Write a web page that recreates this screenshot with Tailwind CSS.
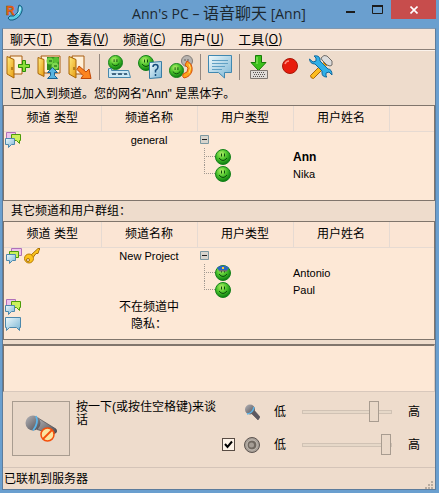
<!DOCTYPE html>
<html lang="zh-CN">
  <head>
    <meta charset="UTF-8" />
    <meta name="viewport" content="width=device-width, initial-scale=1.0" />
    <script src="https://cdn.jsdelivr.net/npm/@tailwindcss/browser@4"></script>
    <title>Ann's PC – 语音聊天 [Ann]</title>
  </head>
  <body class="font-['Liberation_Sans','Noto_Sans_CJK_SC',sans-serif] text-xs text-black">
    <!-- shared icons -->
    <svg class="absolute h-0 w-0" aria-hidden="true">
      <defs>
        <radialGradient id="green" cx="40%" cy="30%" r="70%">
          <stop offset="0" stop-color="#b4f06a" />
          <stop offset="0.5" stop-color="#4cc42c" />
          <stop offset="1" stop-color="#0b7d10" />
        </radialGradient>
        <linearGradient id="blue" x1="0" y1="0" x2="1" y2="1">
          <stop offset="0" stop-color="#f0fafc" />
          <stop offset="1" stop-color="#78b4d4" />
        </linearGradient>
        <linearGradient id="door" x1="0" y1="0" x2="1" y2="1">
          <stop offset="0" stop-color="#ffec80" />
          <stop offset="1" stop-color="#e89c10" />
        </linearGradient>
        <linearGradient id="steel" x1="0" y1="0" x2="1" y2="1">
          <stop offset="0" stop-color="#b4b4b8" />
          <stop offset="1" stop-color="#4c4a50" />
        </linearGradient>
      </defs>
      <symbol id="smile" viewBox="0 0 16 16">
        <circle cx="8" cy="8" r="7.5" fill="url(#green)" stroke="#14821a" />
        <path d="M6.500 4.500v3M9.500 4.500v3" stroke="#0c4d0c" />
        <path d="M4 9q4 5 8 0" fill="none" stroke="#0c4d0c" />
      </symbol>
      <symbol id="doorway" viewBox="0 0 24 24">
        <path d="M4 1h12v18h-9z" fill="#fff0d8" stroke="#a85c10" />
        <path d="M1 1.500l7 3v18.500l-7-4z" fill="url(#door)" stroke="#a86408" />
        <path d="M6 12v3" stroke="#7a4400" />
      </symbol>
      <symbol id="chats" viewBox="0 0 16 16">
        <path d="M1.500 0.500h9v7h-6l-3 3z" fill="#ecc4ec" stroke="#b070b8" />
        <path d="M6.500 2.500h9v6h-1v3l-3-3h-5z" fill="#ccf05c" stroke="#4c9c08" />
        <path d="M0.500 6.500h9v6h-3l-3 3v-3h-3z" fill="url(#blue)" stroke="#4c88ac" />
      </symbol>
      <symbol id="stack" viewBox="0 0 16 16">
        <path d="M5.500 0.500h10v7h-10z" fill="#ecc4ec" stroke="#b070b8" />
        <path d="M3.500 3.500h9v6h-9z" fill="#ccf05c" stroke="#4c9c08" />
        <path d="M0.500 6.500h9v6h-3l-3 3v-3h-3z" fill="url(#blue)" stroke="#4c88ac" />
      </symbol>
      <symbol id="private" viewBox="0 0 16 16">
        <path d="M0.500 1.500h15v10h-1v3l-3-3h-7l-3 3v-3h-1z" fill="url(#blue)" stroke="#4c88ac" />
      </symbol>
      <symbol id="minus" viewBox="0 0 9 9">
        <path d="M0.500 0.500h8v8h-8z" fill="#d8d4cc" stroke="#7c98a0" />
        <path d="M2 4.500h5" stroke="#202020" />
      </symbol>
      <symbol id="branch" viewBox="0 0 12 17">
        <path d="M1.500 0v17M3 8.500h9" stroke="#a09890" stroke-dasharray="1 1" />
      </symbol>
      <symbol id="branch-end" viewBox="0 0 12 17">
        <path d="M1.500 0v9M3 8.500h9" stroke="#a09890" stroke-dasharray="1 1" />
      </symbol>
      <symbol id="mic" viewBox="0 0 32 20">
        <path d="M13 3l18 11q2 3-1 4.500l-4 0-14-4z" fill="url(#steel)" stroke="#3c3a40" stroke-width="0.6" />
        <circle cx="8" cy="8" r="7.500" fill="url(#steel)" />
        <path d="M11 1q3 7-3 14.500" fill="none" stroke="#5cb4e8" stroke-width="1.8" />
      </symbol>
    </svg>

    <div class="flex min-h-screen flex-col bg-[#6a9fcf] pr-[3px] pb-[3px] pl-[2px]">
      <!-- title bar -->
      <header class="grid h-7 grid-cols-[1fr_auto_1fr]">
        <svg class="mt-1 ml-[3px] h-[18px] w-[18px]" viewBox="0 0 18 18">
          <path d="M14 1q4 1 3 6-2 7-9 9-4 1-5-2l2-2 4 0 4-4 0-3z" fill="#58cce4" stroke="#14587c" />
          <path d="M15 3q1 3-2 7" fill="none" stroke="#d8f8fc" />
          <text x="1" y="11" font-family="Liberation Sans" font-size="12" font-weight="700" fill="#f86c10" stroke="#b03c00" stroke-width="0.5">R</text>
        </svg>
        <h1 class="font-['Open_Sans','Noto_Sans_CJK_SC',sans-serif] text-sm leading-[27px] text-[#1c2830]">
          Ann's PC – <span class="text-base leading-[27px]">语音聊天</span> [Ann]
        </h1>
        <div class="flex justify-end">
          <button class="flex h-[19px] w-[27px] items-center justify-center" aria-label="最小化">
            <svg class="h-5 w-[9px]" viewBox="0 0 9 20"><path d="M0 12h9" stroke="#1c1c1c" stroke-width="2" /></svg>
          </button>
          <button class="flex h-[19px] w-[27px] items-center justify-center" aria-label="最大化">
            <svg class="h-[9px] w-[11px]" viewBox="0 0 11 9"><path d="M0.500 1h10v7.500h-10z" fill="none" stroke="#1c1c1c" /><path d="M0 1h11" stroke="#1c1c1c" stroke-width="2" /></svg>
          </button>
          <button class="flex h-[19px] w-[45px] items-center justify-center bg-[#c74d4c]" aria-label="关闭">
            <svg class="h-2 w-2" viewBox="0 0 8 8"><path d="M0.500 0.500l7 7M7.500 0.500l-7 7" stroke="#fff" stroke-width="1.600" /></svg>
          </button>
        </div>
      </header>

      <main class="flex flex-1 flex-col border border-[#5c7c9c] border-t-[#8098b0] bg-[#eedccc]">
        <nav class="flex h-[21px] items-center border-b border-[#8c8078] bg-[#f6e3d5] font-['Noto_Sans_CJK_SC',sans-serif] text-[13px] leading-5">
          <button class="px-[7px]">聊天(<u>T</u>)</button>
          <button class="px-[7px]">查看(<u>V</u>)</button>
          <button class="px-[7px]">频道(<u>C</u>)</button>
          <button class="px-[7px]">用户(<u>U</u>)</button>
          <button class="px-[7px]">工具(<u>O</u>)</button>
        </nav>

        <!-- toolbar -->
        <div class="flex h-8 items-center gap-[7px] border-t border-[#fbf3ec] pl-[3px]">
          <button aria-label="创建频道">
            <svg class="h-6 w-6" viewBox="0 0 24 24">
              <use href="#doorway" width="24" height="24" />
              <path d="M16.500 5.500h3v4h4v3h-4v4h-3v-4h-4v-3h4z" fill="#8ce038" stroke="#2c8c08" />
            </svg>
          </button>
          <button aria-label="加入频道">
            <svg class="h-6 w-6" viewBox="0 0 24 24">
              <path d="M4 1h19v17h-16z" fill="#fff0d8" stroke="#a85c10" />
              <path d="M10 2h12v13h-12z" fill="#2c8c20" />
              <circle cx="13" cy="6" r="3.500" fill="#70d040" />
              <circle cx="19" cy="5" r="3" fill="#58c030" />
              <circle cx="18" cy="11" r="3.500" fill="#80d850" />
              <path d="M12 6h3M17 11h3" stroke="#0c500c" />
              <path d="M1 2.500l6 2v17l-6-3z" fill="url(#door)" stroke="#a86408" />
              <path d="M15.500 12.500l5 5h-3v3l3 3h-10l3-3v-3h-3z" fill="#58b4e0" stroke="#1c6494" />
            </svg>
          </button>
          <button aria-label="离开频道">
            <svg class="h-6 w-6" viewBox="0 0 24 24">
              <use href="#doorway" width="24" height="24" />
              <path d="M11 11l7 6 3-3 2 9.500h-10l2-3-6-6z" fill="#fc8420" stroke="#c04808" />
            </svg>
          </button>
          <span class="h-[26px] w-px bg-[#948880]"></span>
          <button aria-label="网名">
            <svg class="h-6 w-6" viewBox="0 0 24 24">
              <use href="#smile" x="1" width="15" height="15" />
              <path d="M1.500 13.500h3v2h17l2 7h-22z" fill="#cce8f4" stroke="#4888ac" />
              <path d="M5 18l1 2 1-2 1 2 1-2M11 18l1 2 1-2 1 2 1-2M17 18l1 2 1-2 1 2" fill="none" stroke="#204868" />
            </svg>
          </button>
          <button aria-label="用户信息">
            <svg class="h-6 w-6" viewBox="0 0 24 24">
              <use href="#smile" width="16" height="16" />
              <path d="M11.500 7.500l12-1v16l-12 1z" fill="url(#blue)" stroke="#387ca4" />
              <path d="M15 12q0-2.500 2.500-2.500t2.500 2.500q0 2-2.500 3.500v2M17.500 19v2" fill="none" stroke="#144c7c" stroke-width="1.500" />
            </svg>
          </button>
          <button aria-label="呼叫">
            <svg class="h-6 w-6" viewBox="0 0 24 24">
              <circle cx="18" cy="6" r="5.500" fill="#b8b4b0" stroke="#807c78" />
              <path d="M16 4v2M19 4v2" stroke="#605c58" />
              <use href="#smile" y="8" width="15" height="15" />
              <path d="M18 6q6 3 5 10-2 6-8 7-2-1-1-4l4-2 1-4-3-3z" fill="#fca41c" stroke="#d85008" />
              <path d="M20 9q3 4 0 9" fill="none" stroke="#ffe070" />
            </svg>
          </button>
          <span class="h-[26px] w-px bg-[#948880]"></span>
          <button aria-label="文字聊天">
            <svg class="h-6 w-6" viewBox="0 0 24 24">
              <path d="M0.500 0.500h23v17h-7v5.500l-6-5.500h-10z" fill="url(#blue)" stroke="#4088b0" />
              <path d="M4 5.500h16M4 8.500h16M4 11.500h13M4 14.500h10" stroke="#60a0c4" />
            </svg>
          </button>
          <span class="h-[26px] w-px bg-[#948880]"></span>
          <button aria-label="按键通话">
            <svg class="h-6 w-6" viewBox="0 0 24 24">
              <path d="M8.500 0.500h6v7h4.500l-7.500 8-7.500-8h4.500z" fill="#3cc01c" stroke="#187c08" />
              <path d="M10 2v7" stroke="#a0f070" />
              <path d="M3.500 15.500h17v8h-17z" fill="#e0dcd8" stroke="#807870" />
              <path d="M6 17.500h12M7 19.500h11M6 21.500h12" stroke="#585450" stroke-dasharray="1 1" />
            </svg>
          </button>
          <button aria-label="录音">
            <svg class="h-6 w-6" viewBox="0 0 24 24">
              <circle cx="12" cy="11" r="7.500" fill="#e81c0c" stroke="#a81808" />
              <path d="M7 9q1-3 4-3" fill="none" stroke="#ff9080" stroke-width="1.500" />
            </svg>
          </button>
          <button aria-label="设置">
            <svg class="h-6 w-6" viewBox="0 0 24 24">
              <path d="M1.500 20.500l13-13 3 3-13 13q-3 0-3-3z" fill="#fcbc20" stroke="#a86408" />
              <path d="M12 3q3-4 6-2l5 5 0 4-2 1-3-1-5-5z" fill="#dcdcdc" stroke="#706c68" />
              <path d="M0.500 4l3.500 3 3-1 0-3-2-2q5-1 6 3v2l8 8q4 0 4 6l-3-3-3 1 0 3 1 1q-5 0-5-4v-2l-7-7q-5 0-5.500-5z" fill="#30b0e8" stroke="#10689c" />
            </svg>
          </button>
        </div>

        <h2 class="flex h-[23px] items-center pl-[7px] leading-4">已加入到频道。您的网名"Ann" 是黑体字。</h2>

        <!-- joined channel -->
        <section class="h-24 border border-[#80756c] bg-[#fde8d6]">
          <table class="w-full table-fixed border-collapse text-center leading-4">
            <colgroup>
              <col class="w-[97px]" />
              <col class="w-24" />
              <col class="w-24" />
              <col class="w-24" />
              <col />
            </colgroup>
            <thead class="bg-[#fbe5d4]">
              <tr class="h-[25px] border-b border-[#e6dad2]">
                <th class="border-r border-[#e6dad2] p-0 font-normal">频道 类型</th>
                <th class="border-r border-[#e6dad2] p-0 font-normal">频道名称</th>
                <th class="border-r border-[#e6dad2] p-0 font-normal">用户类型</th>
                <th class="border-r border-[#e6dad2] p-0 font-normal">用户姓名</th>
                <td></td>
              </tr>
            </thead>
            <tbody>
              <tr class="h-[17px]">
                <td class="p-0"><svg class="ml-px h-4 w-4"><use href="#chats" /></svg></td>
                <td class="p-0 text-[11px]">general</td>
                <td class="p-0"><svg class="ml-[3px] h-[9px] w-[9px]"><use href="#minus" /></svg></td>
                <td></td>
                <td></td>
              </tr>
              <tr class="h-[17px]">
                <td></td>
                <td></td>
                <td class="p-0">
                  <div class="flex items-center pl-[6px]">
                    <svg class="h-[17px] w-3"><use href="#branch" /></svg>
                    <svg class="h-4 w-4"><use href="#smile" /></svg>
                  </div>
                </td>
                <td class="p-0 text-left text-xs font-bold">Ann</td>
                <td></td>
              </tr>
              <tr class="h-[17px]">
                <td></td>
                <td></td>
                <td class="p-0">
                  <div class="flex items-center pl-[6px]">
                    <svg class="h-[17px] w-3"><use href="#branch-end" /></svg>
                    <svg class="h-4 w-4"><use href="#smile" /></svg>
                  </div>
                </td>
                <td class="p-0 text-left text-[11px]">Nika</td>
                <td></td>
              </tr>
            </tbody>
          </table>
        </section>

        <h2 class="flex h-5 items-center pl-2 leading-4">其它频道和用户群组：</h2>

        <!-- other channels -->
        <section class="h-[119px] border border-[#80756c] bg-[#fde8d6]">
          <table class="w-full table-fixed border-collapse text-center leading-4">
            <colgroup>
              <col class="w-[97px]" />
              <col class="w-24" />
              <col class="w-24" />
              <col class="w-24" />
              <col />
            </colgroup>
            <thead class="bg-[#fbe5d4]">
              <tr class="h-[25px] border-b border-[#e6dad2]">
                <th class="border-r border-[#e6dad2] p-0 font-normal">频道 类型</th>
                <th class="border-r border-[#e6dad2] p-0 font-normal">频道名称</th>
                <th class="border-r border-[#e6dad2] p-0 font-normal">用户类型</th>
                <th class="border-r border-[#e6dad2] p-0 font-normal">用户姓名</th>
                <td></td>
              </tr>
            </thead>
            <tbody>
              <tr class="h-[17px]">
                <td class="p-0">
                  <div class="flex gap-[2px] pl-[2px]">
                    <svg class="h-4 w-4"><use href="#stack" /></svg>
                    <svg class="h-4 w-4" viewBox="0 0 16 16">
                      <path d="M7 7l7-6.500 2 0-1 2-1 3-2 0-3 4" fill="#fcc41c" stroke="#a87008" />
                      <circle cx="5" cy="10.500" r="4.500" fill="#fcc41c" stroke="#b87c08" />
                      <circle cx="4" cy="12" r="1.500" fill="#fde8d6" stroke="#a87008" />
                    </svg>
                  </div>
                </td>
                <td class="p-0 text-[11px]">New Project</td>
                <td class="p-0"><svg class="ml-[3px] h-[9px] w-[9px]"><use href="#minus" /></svg></td>
                <td></td>
                <td></td>
              </tr>
              <tr class="h-[17px]">
                <td></td>
                <td></td>
                <td class="p-0">
                  <div class="flex items-center pl-[6px]">
                    <svg class="h-[17px] w-3"><use href="#branch" /></svg>
                    <svg class="h-4 w-4" viewBox="0 0 16 16">
                      <use href="#smile" width="16" height="16" />
                      <path d="M2 2.500q6-4 12 0l-2 3.500h-8z" fill="#2c68c0" />
                      <path d="M4 5h8v1.500h-8z" fill="#706c74" />
                      <path d="M7 2h2v2h-2z" fill="#fcd030" />
                    </svg>
                  </div>
                </td>
                <td class="p-0 text-left text-[11px]">Antonio</td>
                <td></td>
              </tr>
              <tr class="h-[17px]">
                <td></td>
                <td></td>
                <td class="p-0">
                  <div class="flex items-center pl-[6px]">
                    <svg class="h-[17px] w-3"><use href="#branch-end" /></svg>
                    <svg class="h-4 w-4"><use href="#smile" /></svg>
                  </div>
                </td>
                <td class="p-0 text-left text-[11px]">Paul</td>
                <td></td>
              </tr>
              <tr class="h-[17px]">
                <td class="p-0"><svg class="ml-px h-4 w-4"><use href="#chats" /></svg></td>
                <td class="p-0">不在频道中</td>
                <td></td>
                <td></td>
                <td></td>
              </tr>
              <tr class="h-[17px]">
                <td class="p-0"><svg class="ml-px h-4 w-4"><use href="#private" /></svg></td>
                <td class="p-0">隐私：</td>
                <td></td>
                <td></td>
                <td></td>
              </tr>
            </tbody>
          </table>
        </section>

        <textarea class="mt-1 min-h-12 flex-1 resize-none border border-t-2 border-[#d8c8bc] border-t-[#80756c] border-l-[#80756c] bg-[#fde8d6] px-1" aria-label="消息" readonly></textarea>

        <!-- talk controls -->
        <div class="flex h-[75px] items-start pt-[9px] pl-[9px]">
          <button class="flex h-[55px] w-[58px] shrink-0 items-center justify-center border border-[#a89c90] bg-[#e8d7c8]" aria-label="通话">
            <svg class="h-[27px] w-[33px]" viewBox="0 0 33 27">
              <use href="#mic" width="32" height="20" />
              <circle cx="22.500" cy="19.500" r="6.500" fill="#fce4a0" stroke="#f4500c" stroke-width="1.500" />
              <path d="M18 24l9-9" stroke="#f4500c" stroke-width="1.800" />
            </svg>
          </button>
          <p class="ml-[6px] w-36 shrink-0 leading-[13px]">按一下(或按住空格键)来谈话</p>
          <div class="flex flex-1 flex-col gap-3 pr-[15px] pl-[2px]">
            <div class="flex h-[21px] items-center">
              <svg class="ml-[22px] h-4 w-4" viewBox="0 0 16 16">
                <path d="M7 9l3-3 6 7-2 3z" fill="#5c5860" stroke="#444048" stroke-width="0.500" />
                <circle cx="6" cy="5.500" r="5" fill="url(#steel)" />
                <path d="M3 10q6-1 7-7" fill="none" stroke="#5cb4e8" stroke-width="1.500" />
              </svg>
              <label for="mic-level" class="ml-[14px]">低</label>
              <input id="mic-level" type="range" value="84" class="mx-4 h-[21px] w-0 flex-1 appearance-none bg-transparent [&::-webkit-slider-runnable-track]:h-1 [&::-webkit-slider-runnable-track]:border [&::-webkit-slider-runnable-track]:border-[#d0c2b4] [&::-webkit-slider-runnable-track]:bg-[#e6d8c8] [&::-webkit-slider-thumb]:-mt-[10px] [&::-webkit-slider-thumb]:h-[21px] [&::-webkit-slider-thumb]:w-[10px] [&::-webkit-slider-thumb]:appearance-none [&::-webkit-slider-thumb]:border [&::-webkit-slider-thumb]:border-[#a89c90] [&::-webkit-slider-thumb]:bg-[#ead9c9]" />
              <span>高</span>
            </div>
            <div class="flex h-[21px] items-center">
              <input type="checkbox" checked aria-label="扬声器" class="peer h-[13px] w-[13px] appearance-none border border-[#584c44] bg-[#fdf3e8]" />
              <svg class="pointer-events-none -ml-[13px] hidden h-[13px] w-[13px] peer-checked:block" viewBox="0 0 13 13"><path d="M3 6l2.500 3 4.500-5.500" fill="none" stroke="#000" stroke-width="2" /></svg>
              <svg class="ml-[9px] h-4 w-4" viewBox="0 0 16 16">
                <circle cx="8" cy="8" r="7.500" fill="#a8a098" stroke="#5c5450" />
                <circle cx="8" cy="8" r="5" fill="#706860" stroke="#c8c0b8" />
                <circle cx="7.500" cy="8" r="2.500" fill="#a49c94" />
              </svg>
              <label for="speaker-level" class="ml-[14px]">低</label>
              <input id="speaker-level" type="range" value="100" class="mx-4 h-[21px] w-0 flex-1 appearance-none bg-transparent [&::-webkit-slider-runnable-track]:h-1 [&::-webkit-slider-runnable-track]:border [&::-webkit-slider-runnable-track]:border-[#d0c2b4] [&::-webkit-slider-runnable-track]:bg-[#e6d8c8] [&::-webkit-slider-thumb]:-mt-[10px] [&::-webkit-slider-thumb]:h-[21px] [&::-webkit-slider-thumb]:w-[10px] [&::-webkit-slider-thumb]:appearance-none [&::-webkit-slider-thumb]:border [&::-webkit-slider-thumb]:border-[#a89c90] [&::-webkit-slider-thumb]:bg-[#ead9c9]" />
              <span>高</span>
            </div>
          </div>
        </div>

        <footer class="flex h-[22px] items-center justify-between border-t border-[#d4c4b8] pr-[2px] pl-px leading-4">
          <span>已联机到服务器</span>
          <svg class="h-2 w-2 self-end" viewBox="0 0 8 8">
            <path d="M6 0h2v2h-2zM3 3h2v2h-2zM6 3h2v2h-2zM0 6h2v2h-2zM3 6h2v2h-2zM6 6h2v2h-2z" fill="#b8aca0" />
          </svg>
        </footer>
      </main>
    </div>
  </body>
</html>
